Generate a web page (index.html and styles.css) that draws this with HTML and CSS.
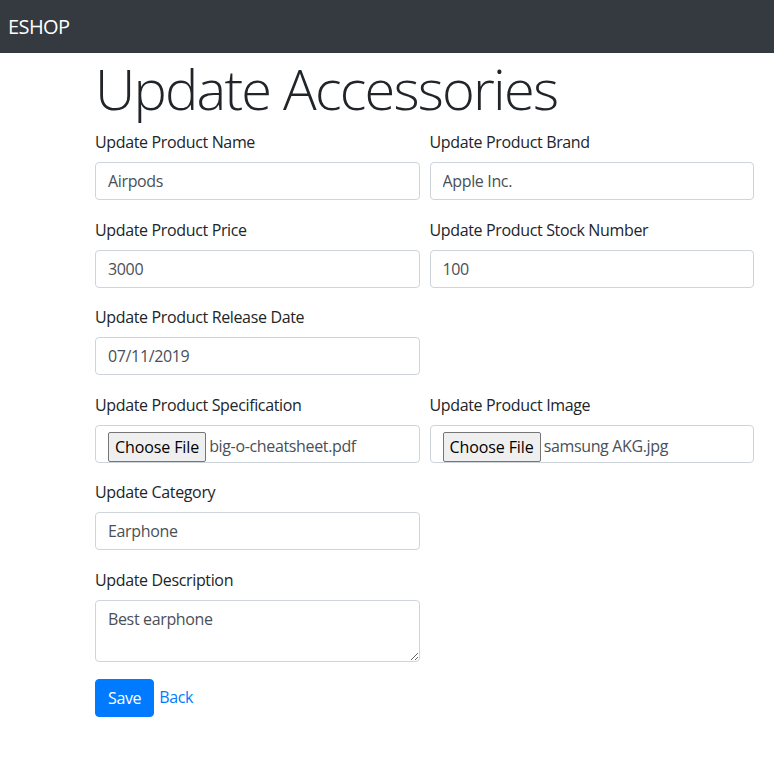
FILE: index.html
```html
<!DOCTYPE html>
<html lang="en">
<head>
<meta charset="utf-8">
<title>Update Accessories</title>
<link rel="stylesheet" href="styles.css">
</head>
<body>
<nav class="navbar"><a class="brand" href="#">ESHOP</a></nav>
<main class="page">
  <h1 class="title">Update Accessories</h1>
  <form class="form">
    <div class="row">
      <div class="group">
        <label class="label">Update Product Name</label>
        <input class="control" type="text" value="Airpods">
      </div>
      <div class="group">
        <label class="label">Update Product Brand</label>
        <input class="control" type="text" value="Apple Inc.">
      </div>
    </div>
    <div class="row">
      <div class="group">
        <label class="label">Update Product Price</label>
        <input class="control" type="text" value="3000">
      </div>
      <div class="group">
        <label class="label">Update Product Stock Number</label>
        <input class="control" type="text" value="100">
      </div>
    </div>
    <div class="row">
      <div class="group">
        <label class="label">Update Product Release Date</label>
        <input class="control" type="text" value="07/11/2019">
      </div>
    </div>
    <div class="row">
      <div class="group">
        <label class="label">Update Product Specification</label>
        <div class="control file"><button type="button" class="file-btn">Choose File</button><span class="file-name">big-o-cheatsheet.pdf</span></div>
      </div>
      <div class="group">
        <label class="label">Update Product Image</label>
        <div class="control file"><button type="button" class="file-btn">Choose File</button><span class="file-name">samsung AKG.jpg</span></div>
      </div>
    </div>
    <div class="row">
      <div class="group">
        <label class="label">Update Category</label>
        <input class="control" type="text" value="Earphone">
      </div>
    </div>
    <div class="row">
      <div class="group">
        <label class="label">Update Description</label>
        <textarea class="control area" rows="2">Best earphone</textarea>
      </div>
    </div>
    <div class="actions">
      <button type="button" class="btn-save">Save</button>
      <a class="back" href="#">Back</a>
    </div>
  </form>
</main>
</body>
</html>
```

FILE: styles.css
```css
* { box-sizing: border-box; }
body {
  margin: 0;
  font-family: "Open Sans", "Noto Sans", sans-serif;
  font-size: 16px;
  line-height: 1.5;
  letter-spacing: -0.35px;
  color: #212529;
  background: #fff;
}
.navbar {
  height: 53px;
  background: #343a40;
  display: flex;
  align-items: center;
  padding: 0 8px;
}
.brand {
  color: #fff;
  font-size: 20px;
  text-decoration: none;
  line-height: 30px;
  letter-spacing: -0.6px;
}
.page {
  padding: 2px 20px 0 95px;
}
.title {
  font-size: 56px;
  font-weight: 300;
  line-height: 1.2;
  letter-spacing: -1.8px;
  margin: 0 0 8px;
}
.row {
  display: grid;
  grid-template-columns: 1fr 1fr;
  column-gap: 10px;
}
.group {
  margin-bottom: 17.5px;
}
.label {
  display: block;
  margin-bottom: 8px;
}
.control {
  display: block;
  width: 100%;
  height: 38px;
  padding: 6px 12px;
  font-family: inherit;
  font-size: 16px;
  line-height: 1.5;
  letter-spacing: -0.35px;
  color: #495057;
  background: #fff;
  border: 1px solid #ced4da;
  border-radius: 4px;
  outline: none;
}
.file {
  display: flex;
  align-items: flex-start;
}
.file-btn {
  height: 30px;
  padding: 0 6px;
  font-family: inherit;
  font-size: 16px;
  letter-spacing: -0.1px;
  color: #000;
  background: #efefef;
  border: 1px solid #767676;
  border-radius: 2px;
  line-height: 28px;
}
.file-name {
  margin-left: 3px;
  line-height: 28px;
  color: #495057;
}
.area {
  height: 62px;
  resize: vertical;
}
.actions {
  display: flex;
  align-items: center;
  gap: 5px;
}
.btn-save {
  height: 38px;
  padding: 6px 12px;
  font-family: inherit;
  font-size: 16px;
  line-height: 1.5;
  letter-spacing: -0.35px;
  color: #fff;
  background: #007bff;
  border: 1px solid #007bff;
  border-radius: 4px;
}
.back {
  color: #007bff;
  text-decoration: none;
  margin-top: -2px;
}
```
